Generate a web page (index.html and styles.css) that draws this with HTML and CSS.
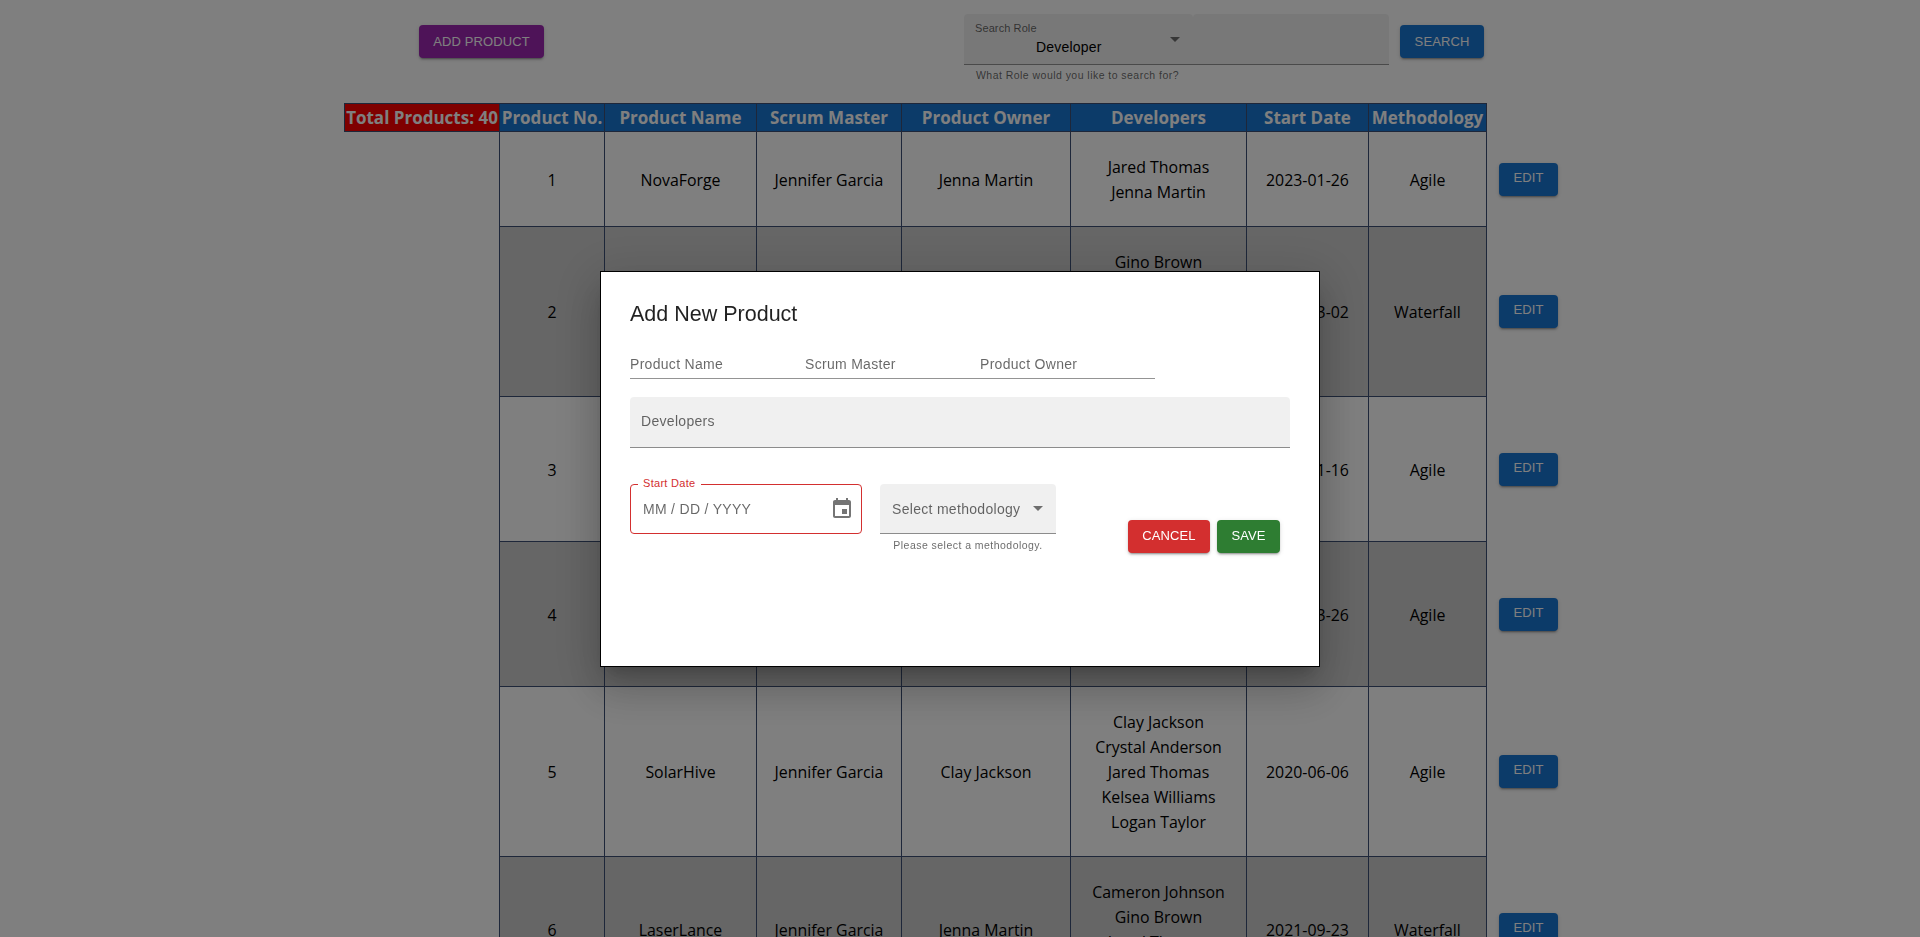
FILE: index.html
```html
<!DOCTYPE html>
<html lang="en">
<head>
    <meta charset="UTF-8">
    <meta name="viewport" content="width=device-width, initial-scale=1.0">
    <title>Products</title>
    <link rel="stylesheet" href="styles.css">
</head>
<body>
    <div class="toolbar">
        <button class="btn btn-purple btn-add">Add Product</button>
        <div class="search-group">
            <div class="search-role">
                <div class="search-select">
                    <span class="search-label">Search Role</span>
                    <span class="search-value">Developer</span>
                    <span class="arrow search-arrow"></span>
                </div>
                <div class="search-rest"></div>
            </div>
            <p class="helper search-helper">What Role would you like to search for?</p>
        </div>
        <button class="btn btn-blue btn-search">Search</button>
    </div>

    <table class="products">
        <colgroup>
            <col class="col-total">
            <col class="col-no">
            <col class="col-name">
            <col class="col-scrum">
            <col class="col-owner">
            <col class="col-devs">
            <col class="col-date">
            <col class="col-method">
            <col class="col-edit">
        </colgroup>
        <thead>
            <tr>
                <th class="total">Total Products: 40</th>
                <th>Product No.</th>
                <th>Product Name</th>
                <th>Scrum Master</th>
                <th>Product Owner</th>
                <th>Developers</th>
                <th>Start Date</th>
                <th>Methodology</th>
                <th class="plain"></th>
            </tr>
        </thead>
        <tbody>
            <tr>
                <td class="plain"></td>
                <td>1</td>
                <td>NovaForge</td>
                <td>Jennifer Garcia</td>
                <td>Jenna Martin</td>
                <td><div>Jared Thomas</div><div>Jenna Martin</div></td>
                <td>2023-01-26</td>
                <td>Agile</td>
                <td class="plain"><button class="btn btn-blue btn-edit">Edit</button></td>
            </tr>
            <tr class="even">
                <td class="plain"></td>
                <td>2</td>
                <td>QuantumLeaf</td>
                <td>Jennifer Garcia</td>
                <td>Logan Taylor</td>
                <td><div>Gino Brown</div><div>Jared Thomas</div><div>Kelsea Williams</div><div>Logan Taylor</div><div>Clay Jackson</div></td>
                <td>2022-03-02</td>
                <td>Waterfall</td>
                <td class="plain"><button class="btn btn-blue btn-edit">Edit</button></td>
            </tr>
            <tr>
                <td class="plain"></td>
                <td>3</td>
                <td>ByteBloom</td>
                <td>Jennifer Garcia</td>
                <td>Gino Brown</td>
                <td><div>Crystal Anderson</div><div>Gino Brown</div><div>Jenna Martin</div><div>Logan Taylor</div></td>
                <td>2021-11-16</td>
                <td>Agile</td>
                <td class="plain"><button class="btn btn-blue btn-edit">Edit</button></td>
            </tr>
            <tr class="even">
                <td class="plain"></td>
                <td>4</td>
                <td>CloudNest</td>
                <td>Jennifer Garcia</td>
                <td>Kelsea Williams</td>
                <td><div>Cameron Johnson</div><div>Clay Jackson</div><div>Jared Thomas</div><div>Kelsea Williams</div></td>
                <td>2023-03-26</td>
                <td>Agile</td>
                <td class="plain"><button class="btn btn-blue btn-edit">Edit</button></td>
            </tr>
            <tr>
                <td class="plain"></td>
                <td>5</td>
                <td>SolarHive</td>
                <td>Jennifer Garcia</td>
                <td>Clay Jackson</td>
                <td><div>Clay Jackson</div><div>Crystal Anderson</div><div>Jared Thomas</div><div>Kelsea Williams</div><div>Logan Taylor</div></td>
                <td>2020-06-06</td>
                <td>Agile</td>
                <td class="plain"><button class="btn btn-blue btn-edit">Edit</button></td>
            </tr>
            <tr class="even">
                <td class="plain"></td>
                <td>6</td>
                <td>LaserLance</td>
                <td>Jennifer Garcia</td>
                <td>Jenna Martin</td>
                <td><div>Cameron Johnson</div><div>Gino Brown</div><div>Jared Thomas</div><div>Logan Taylor</div></td>
                <td>2021-09-23</td>
                <td>Waterfall</td>
                <td class="plain"><button class="btn btn-blue btn-edit">Edit</button></td>
            </tr>
        </tbody>
    </table>

    <!-- modal -->
    <div class="backdrop"></div>
    <div class="modal">
        <h2 class="modal-title">Add New Product</h2>
        <div class="name-fields">
            <div class="std-field">Product Name</div>
            <div class="std-field">Scrum Master</div>
            <div class="std-field">Product Owner</div>
        </div>
        <div class="devs-field">Developers</div>
        <div class="bottom-row">
            <div class="date-field">
                <span class="date-label">Start Date</span>
                <span class="date-text">MM / DD / YYYY</span>
                <svg class="date-icon" viewBox="0 0 24 24" width="24" height="24">
                    <path d="M17 12h-5v5h5v-5zM16 1v2H8V1H6v2H5c-1.11 0-1.99.9-1.99 2L3 19c0 1.1.89 2 2 2h14c1.1 0 2-.9 2-2V5c0-1.1-.9-2-2-2h-1V1h-2zm3 18H5V8h14v11z"></path>
                </svg>
            </div>
            <div class="method-group">
                <div class="method-field">
                    <span>Select methodology</span>
                    <span class="arrow"></span>
                </div>
                <p class="helper method-helper">Please select a methodology.</p>
            </div>
            <div class="modal-actions">
                <button class="btn btn-red">Cancel</button>
                <button class="btn btn-green">Save</button>
            </div>
        </div>
    </div>
</body>
</html>
```

FILE: styles.css
```css
html, body {
    height: 100%;
}

body {
    margin: 0;
    overflow: hidden;
    background: #fff;
    font-family: 'Liberation Sans', Arial, sans-serif;
    color: #000;
}

/* buttons */
.btn {
    display: block;
    height: 33px;
    padding: 0;
    border: none;
    border-radius: 4px;
    color: #fff;
    font-family: 'Liberation Sans', Arial, sans-serif;
    font-size: 13px;
    letter-spacing: 0.1px;
    text-transform: uppercase;
    box-shadow: 0 3px 1px -2px rgba(0, 0, 0, 0.2), 0 2px 2px 0 rgba(0, 0, 0, 0.14), 0 1px 5px 0 rgba(0, 0, 0, 0.12);
}

.btn-purple { background: #9c27b0; }
.btn-blue { background: #1976d2; }
.btn-red { background: #d32f2f; width: 82px; padding-bottom: 2px; }
.btn-green { background: #2e7d32; width: 63px; padding-bottom: 2px; }

/* top bar */
.toolbar {
    display: flex;
    align-items: flex-start;
    height: 103px;
    padding-left: 419px;
    box-sizing: border-box;
}

.btn-add {
    width: 125px;
    margin-top: 25px;
}

.search-group {
    width: 425px;
    margin-left: 420px;
    margin-top: 14px;
}

.search-role {
    display: flex;
    height: 51px;
    box-sizing: border-box;
    border-bottom: 1px solid rgba(0, 0, 0, 0.42);
}

.search-select {
    position: relative;
    width: 229px;
    background: rgba(0, 0, 0, 0.06);
    border-radius: 4px 4px 0 0;
}

.search-rest {
    flex: 1;
    background: rgba(0, 0, 0, 0.06);
    border-radius: 4px 4px 0 0;
}

.search-label {
    position: absolute;
    left: 11px;
    top: 8px;
    font-size: 11px;
    letter-spacing: 0.1px;
    color: rgba(0, 0, 0, 0.6);
}

.search-value {
    position: absolute;
    left: 72px;
    top: 25px;
    font-size: 14px;
    letter-spacing: 0.2px;
}

.arrow {
    display: inline-block;
    width: 0;
    height: 0;
    border-left: 5px solid transparent;
    border-right: 5px solid transparent;
    border-top: 5px solid rgba(0, 0, 0, 0.54);
}

.search-arrow {
    position: absolute;
    left: 206px;
    top: 23px;
}

.helper {
    margin: 0;
    font-size: 10.5px;
    letter-spacing: 0.46px;
    color: rgba(0, 0, 0, 0.6);
}

.search-helper {
    margin-top: 4px;
    padding-left: 12px;
}

.btn-search {
    width: 84px;
    margin-top: 25px;
    margin-left: 11px;
}

/* product table */
.products {
    table-layout: fixed;
    width: 1213px;
    margin-left: 344px;
    border-collapse: collapse;
    font-family: 'Open Sans', 'Noto Sans', sans-serif;
    font-size: 15.9px;
}

.col-total { width: 155px; }
.col-no { width: 105px; }
.col-name { width: 152px; }
.col-scrum { width: 145px; }
.col-owner { width: 169px; }
.col-devs { width: 176px; }
.col-date { width: 122px; }
.col-method { width: 118px; }
.col-edit { width: 71px; }

.products th {
    height: 27px;
    padding: 0;
    background: #1976d2;
    border: 1px solid #3c4f74;
    color: #fff;
    font-size: 17px;
    font-weight: 700;
    white-space: nowrap;
    overflow: hidden;
}

.products th.total {
    background: #f00;
}

.products td {
    padding: 23px 0 21px;
    border: 1px solid #3c4f74;
    text-align: center;
    vertical-align: middle;
    line-height: 25px;
    background: #fff;
}

.products tr.even td {
    background: #ccc;
}

.products th.plain,
.products td.plain,
.products tr.even td.plain {
    border: none;
    background: transparent;
}

.products td:nth-child(2),
.products th:nth-child(2) {
    border-left: 1px solid #3c4f74;
}

.products td.plain {
    padding: 22px 0;
}

.btn-edit {
    width: 59px;
    margin-left: 12px;
    padding-bottom: 4px;
}

/* dim layer and dialog */
.backdrop {
    position: fixed;
    top: 0;
    left: 0;
    right: 0;
    bottom: 0;
    background: rgba(0, 0, 0, 0.5);
}

.modal {
    position: fixed;
    left: 600px;
    top: 271px;
    width: 720px;
    height: 396px;
    box-sizing: border-box;
    padding: 26px 24px 0 29px;
    background: #fff;
    border: 1px solid #000;
    box-shadow: 0 11px 15px -7px rgba(0, 0, 0, 0.2), 0 24px 38px 3px rgba(0, 0, 0, 0.14), 0 9px 46px 8px rgba(0, 0, 0, 0.12);
}

.modal-title {
    margin: 0;
    font-size: 21.5px;
    font-weight: 400;
    line-height: 32px;
    color: rgba(0, 0, 0, 0.87);
}

.name-fields {
    display: flex;
    margin-top: 20px;
}

.std-field {
    width: 175px;
    height: 29px;
    box-sizing: border-box;
    padding-top: 4px;
    border-bottom: 1px solid rgba(0, 0, 0, 0.42);
    font-size: 14px;
    line-height: 20px;
    letter-spacing: 0.3px;
    color: rgba(0, 0, 0, 0.6);
}

.devs-field {
    width: 660px;
    height: 51px;
    box-sizing: border-box;
    margin-top: 18px;
    padding: 14px 11px 0;
    background: rgba(0, 0, 0, 0.06);
    border-bottom: 1px solid rgba(0, 0, 0, 0.42);
    border-radius: 4px 4px 0 0;
    font-size: 14px;
    line-height: 20px;
    letter-spacing: 0.3px;
    color: rgba(0, 0, 0, 0.6);
}

.bottom-row {
    display: flex;
    align-items: flex-start;
    margin-top: 36px;
}

.date-field {
    position: relative;
    display: flex;
    align-items: center;
    justify-content: space-between;
    width: 232px;
    height: 50px;
    box-sizing: border-box;
    padding: 0 7px 0 12px;
    border: 1px solid #d32f2f;
    border-radius: 4px;
    font-size: 14px;
    letter-spacing: 0.3px;
    color: rgba(0, 0, 0, 0.6);
}

.date-label {
    position: absolute;
    left: 7px;
    top: -8px;
    padding: 0 5px;
    background: #fff;
    font-size: 11px;
    line-height: 13px;
    color: #d32f2f;
}

.date-icon {
    fill: rgba(0, 0, 0, 0.54);
}

.method-group {
    width: 176px;
    margin-left: 18px;
}

.method-field {
    display: flex;
    align-items: center;
    justify-content: space-between;
    height: 50px;
    box-sizing: border-box;
    padding: 0 13px 0 12px;
    background: rgba(0, 0, 0, 0.06);
    border-bottom: 1px solid rgba(0, 0, 0, 0.42);
    border-radius: 4px 4px 0 0;
    font-size: 14px;
    letter-spacing: 0.3px;
    color: rgba(0, 0, 0, 0.6);
}

.method-helper {
    margin-top: 5px;
    text-align: center;
}

.modal-actions {
    display: flex;
    gap: 7px;
    margin-top: 36px;
    margin-left: 72px;
}
```
